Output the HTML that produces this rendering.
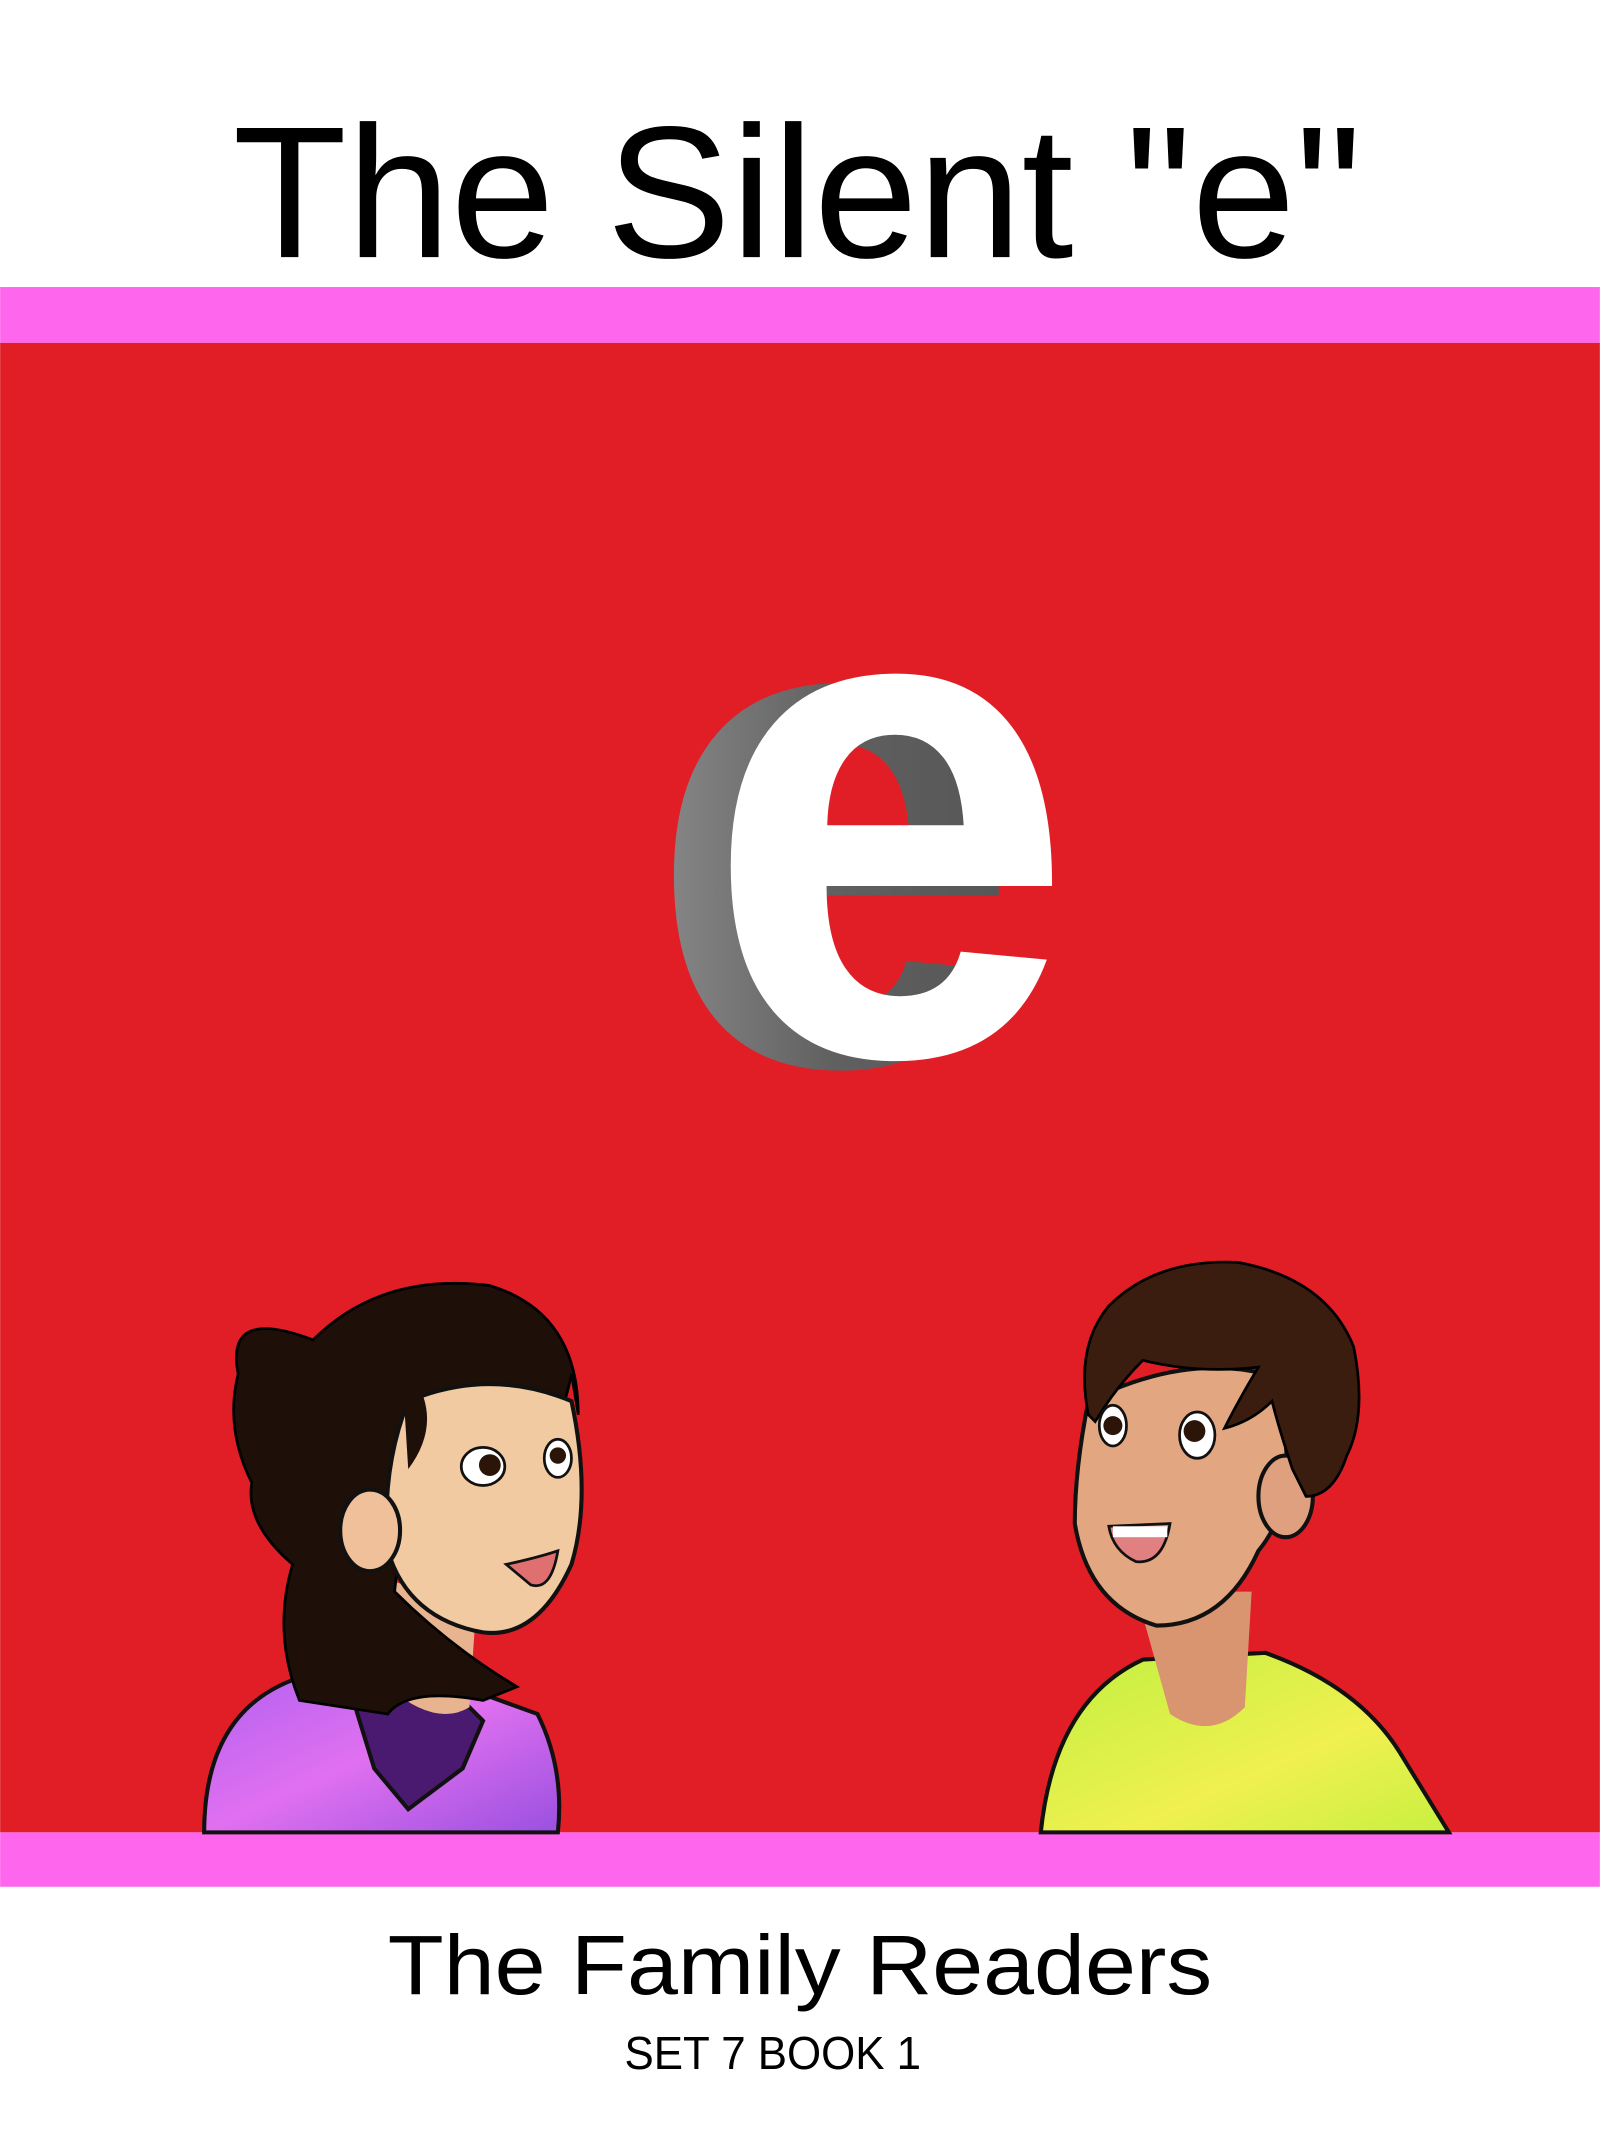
<!DOCTYPE html>
<html><head><meta charset="utf-8"><style>
html,body{margin:0;padding:0;background:#fff;}
svg{display:block;}
</style></head><body>
<svg width="1600" height="2133" viewBox="0 0 1176 1568" xmlns="http://www.w3.org/2000/svg">
<defs>
<linearGradient id="gr" x1="0" y1="0" x2="1" y2="0"><stop offset="0" stop-color="#8a8a8a"/><stop offset="0.5" stop-color="#606060"/><stop offset="1" stop-color="#555"/></linearGradient>
<linearGradient id="pu" x1="0" y1="0" x2="1" y2="1"><stop offset="0" stop-color="#b060f0"/><stop offset="0.5" stop-color="#e070f0"/><stop offset="1" stop-color="#9a50e0"/></linearGradient>
<linearGradient id="gn" x1="0" y1="0" x2="1" y2="1"><stop offset="0" stop-color="#c0f040"/><stop offset="0.6" stop-color="#f0f050"/><stop offset="1" stop-color="#c8f040"/></linearGradient>
</defs>
<rect width="1176" height="1568" fill="#fff"/>
<text x="586" y="189" text-anchor="middle" font-family="Liberation Sans, sans-serif" font-size="138" textLength="830" lengthAdjust="spacingAndGlyphs" fill="#000">The Silent "e"</text>
<rect x="0" y="211" width="1176" height="41" fill="#ff66ee"/>
<rect x="0" y="252" width="1176" height="1095" fill="#e11e25"/>
<rect x="0" y="1347" width="1176" height="40" fill="#ff66ee"/>
<text x="588" y="1466" text-anchor="middle" font-family="Liberation Sans, sans-serif" font-size="62" textLength="606" lengthAdjust="spacingAndGlyphs" fill="#000">The Family Readers</text>
<text x="568" y="1521" text-anchor="middle" font-family="Liberation Sans, sans-serif" font-size="34" textLength="218" lengthAdjust="spacingAndGlyphs" fill="#000">SET 7 BOOK 1</text>

<!-- 3D e -->
<text x="476" y="782" font-family="Liberation Sans, sans-serif" font-weight="bold" font-size="520" fill="url(#gr)" textLength="275" lengthAdjust="spacingAndGlyphs">e</text>
<text x="518" y="775" font-family="Liberation Sans, sans-serif" font-weight="bold" font-size="520" fill="#fff" textLength="272" lengthAdjust="spacingAndGlyphs">e</text>

<!-- girl -->
<path d="M150 1347 Q150 1260 215 1235 L260 1225 L340 1240 L395 1260 Q415 1300 410 1347 Z" fill="url(#pu)" stroke="#111" stroke-width="3"/>
<path d="M255 1235 L275 1300 L300 1330 L340 1300 L355 1265 L330 1240 Z" fill="#4a1a70" stroke="#111" stroke-width="3"/>
<path d="M280 1160 L285 1240 Q320 1270 345 1255 L350 1180 Z" fill="#e8b490"/>
<path d="M175 1010 Q165 960 230 985 Q280 935 360 945 Q425 965 425 1040 L420 1010 Q410 1060 395 1040 L300 1080 L290 1170 Q330 1210 380 1240 L355 1250 Q300 1240 285 1260 L220 1250 Q200 1200 215 1150 Q180 1120 185 1090 Q165 1050 175 1010 Z" fill="#1e1008" stroke="#000" stroke-width="2"/>
<path d="M300 1030 Q360 1005 420 1030 Q435 1100 420 1150 Q395 1205 355 1200 Q300 1190 285 1140 Q280 1080 300 1030 Z" fill="#f2caa2" stroke="#111" stroke-width="3"/>
<ellipse cx="272" cy="1125" rx="22" ry="30" fill="#f0c09a" stroke="#111" stroke-width="3"/>
<path d="M295 1000 Q330 1040 300 1080 Z" fill="#1e1008"/>
<ellipse cx="355" cy="1078" rx="16" ry="14" fill="#fff" stroke="#111" stroke-width="2"/><circle cx="360" cy="1077" r="8" fill="#2a1508"/>
<ellipse cx="410" cy="1072" rx="10" ry="14" fill="#fff" stroke="#111" stroke-width="2"/><circle cx="410" cy="1070" r="6" fill="#2a1508"/>
<path d="M372 1150 Q395 1145 410 1140 Q405 1170 390 1165 Z" fill="#e07070" stroke="#111" stroke-width="2"/>

<!-- boy -->
<path d="M765 1347 Q775 1250 840 1220 L930 1215 Q1000 1240 1030 1290 L1065 1347 Z" fill="url(#gn)" stroke="#111" stroke-width="3"/>
<path d="M835 1170 L860 1260 Q890 1280 915 1255 L920 1170 Z" fill="#d8956f"/>
<path d="M800 1030 Q790 1080 790 1120 Q800 1180 850 1195 Q900 1195 925 1140 Q950 1110 945 1060 L930 1010 Q870 995 800 1030 Z" fill="#e2a680" stroke="#111" stroke-width="3"/>
<ellipse cx="945" cy="1100" rx="20" ry="30" fill="#dfa07f" stroke="#111" stroke-width="3"/>
<path d="M800 1040 Q790 990 815 960 Q850 925 910 928 Q975 940 995 990 Q1005 1040 990 1070 Q980 1100 960 1100 L950 1080 Q940 1050 935 1030 Q920 1045 900 1050 Q910 1030 925 1005 Q880 1010 840 1000 Q820 1020 805 1045 Z" fill="#3a1d0e" stroke="#000" stroke-width="2"/>
<ellipse cx="818" cy="1048" rx="10" ry="15" fill="#fff" stroke="#111" stroke-width="2"/><circle cx="818" cy="1048" r="7" fill="#2a1508"/>
<ellipse cx="880" cy="1055" rx="13" ry="17" fill="#fff" stroke="#111" stroke-width="2"/><circle cx="878" cy="1052" r="8" fill="#2a1508"/>
<path d="M815 1122 L860 1120 Q855 1150 835 1148 Q818 1140 815 1122 Z" fill="#e08080" stroke="#111" stroke-width="2"/>
<rect x="818" y="1122" width="40" height="8" fill="#fff"/>
</svg>
</body></html>
